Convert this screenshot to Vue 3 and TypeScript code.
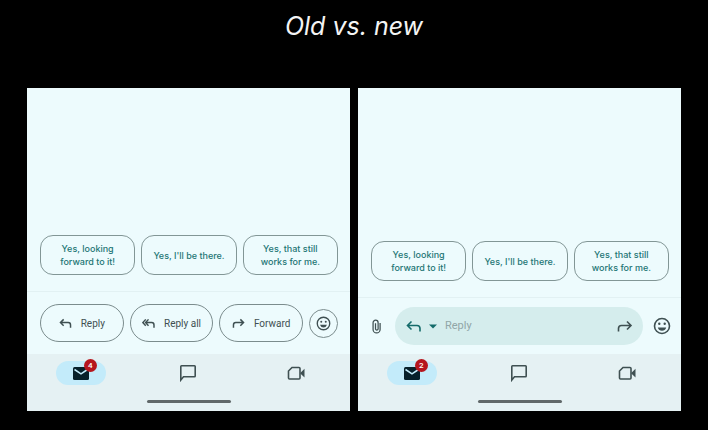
<script setup lang="ts">
interface Panel {
  id: string
  kind: 'buttons' | 'field'
  unread: number
}

const panels: Panel[] = [
  { id: 'old', kind: 'buttons', unread: 4 },
  { id: 'new', kind: 'field', unread: 2 },
]

const suggestions: string[][] = [
  ['Yes, looking', 'forward to it!'],
  ["Yes, I'll be there."],
  ['Yes, that still', 'works for me.'],
]
</script>

<template>
  <main class="page">
    <h1 class="title">Old vs. new</h1>
    <div class="panels">
      <section v-for="panel in panels" :key="panel.id" class="panel" :aria-label="panel.id">
        <div class="chips">
          <button v-for="lines in suggestions" :key="lines[0]" class="chip" type="button">
            <span v-for="line in lines" :key="line">{{ line }}</span>
          </button>
        </div>

        <div v-if="panel.kind === 'buttons'" class="actions">
          <button class="action" type="button">
            <svg class="arrow" viewBox="0 0 14 12"><path d="M5 1.5 1.5 5 5 8.500M1.500 5H10Q12.500 5 12.500 7.500V10.500" /></svg>
            Reply
          </button>
          <button class="action" type="button">
            <svg class="arrow" viewBox="0 0 14 12"><path d="M4 1.500.8 5 4 8.500M7 1.500 3.800 5 7 8.500M3.800 5H10.500Q13 5 13 7.500V10.500" /></svg>
            Reply all
          </button>
          <button class="action" type="button">
            <svg class="arrow" viewBox="0 0 14 12"><path d="M9 1.500 12.500 5 9 8.500M12.500 5H4Q1.500 5 1.500 7.500V10.500" /></svg>
            Forward
          </button>
          <button class="emoji ringed" type="button" aria-label="Add reaction">
            <svg viewBox="0 0 18 18">
              <circle cx="9" cy="9" r="7.500" />
              <circle class="solid" cx="6.300" cy="6.800" r="1.200" />
              <circle class="solid" cx="11.700" cy="6.800" r="1.200" />
              <path class="solid" d="M4.800 10.500H13.200Q12.200 13.800 9 13.800T4.800 10.500Z" />
            </svg>
          </button>
        </div>

        <div v-else class="composer">
          <button class="clip" type="button" aria-label="Attach file">
            <svg viewBox="0 0 10 16"><path d="M9 4V11.200A3.900 3.900 0 0 1 1.200 11.200V3.800A2.700 2.700 0 0 1 6.800 3.800V10.800A1.500 1.500 0 0 1 3.900 10.800V4.500" /></svg>
          </button>
          <div class="field">
            <button class="mode" type="button" aria-label="Reply">
              <svg viewBox="0 0 16 13"><path d="M5.500 1.500 1.500 5.500 5.500 9.500M1.500 5.500H11Q14 5.500 14 8.500V11.500" /></svg>
            </button>
            <button class="caret" type="button" aria-label="Choose reply type">
              <svg viewBox="0 0 8 5"><path d="M0 .5H8L4 4.500Z" /></svg>
            </button>
            <input class="entry" type="text" placeholder="Reply" aria-label="Reply" />
            <button class="forward" type="button" aria-label="Forward">
              <svg viewBox="0 0 16 13"><path d="M10 1.500 14 5.500 10 9.500M14 5.500H4.500Q1.500 5.500 1.500 8.500V11.500" /></svg>
            </button>
          </div>
          <button class="emoji" type="button" aria-label="Add reaction">
            <svg viewBox="0 0 18 18">
              <circle cx="9" cy="9" r="7.500" />
              <circle class="solid" cx="6.300" cy="6.800" r="1.200" />
              <circle class="solid" cx="11.700" cy="6.800" r="1.200" />
              <path class="solid" d="M4.800 10.500H13.200Q12.200 13.800 9 13.800T4.800 10.500Z" />
            </svg>
          </button>
        </div>

        <nav class="nav">
          <div class="tabs">
            <button class="tab" type="button" aria-label="Mail">
              <span class="pill">
                <svg class="mail" viewBox="0 0 16 13">
                  <rect width="16" height="13" rx="1.500" />
                  <path d="M1.500 2.500 8 6.800 14.500 2.500" />
                </svg>
                <span class="badge">{{ panel.unread }}</span>
              </span>
            </button>
            <button class="tab" type="button" aria-label="Chat">
              <svg class="outline" viewBox="0 0 18 18"><path d="M1.800 16V2.500Q1.800 1.800 2.500 1.800H15.500Q16.200 1.800 16.200 2.500V12Q16.200 12.700 15.500 12.700H4.500Z" /></svg>
            </button>
            <button class="tab" type="button" aria-label="Meet">
              <svg class="outline" viewBox="0 0 18 18">
                <path d="M5 3.500H12Q13 3.500 13 4.500V14Q13 15 12 15H2.500Q1.500 15 1.500 14V7Z" />
                <path class="solid" d="M13 9.200 17.500 4.800V13.600Z" />
              </svg>
            </button>
          </div>
          <div class="handle"></div>
        </nav>
      </section>
    </div>
  </main>
</template>

<style>
body {
  background: #000;
}
</style>

<style scoped>
.page {
  box-sizing: border-box;
  min-height: 100vh;
  padding: 8px 27px 16px;
  background: #000;
  font-family: Roboto, "Liberation Sans", sans-serif;
}

.title {
  margin: 0 0 44px;
  color: #f4f4f4;
  font: italic 400 25px/36px Inter, sans-serif;
  text-align: center;
}

.panels {
  display: grid;
  grid-template-columns: 1fr 1fr;
  gap: 8px;
}

.panel {
  display: flex;
  flex-direction: column;
  justify-content: flex-end;
  aspect-ratio: 1;
  min-width: 0;
  background: #edfbfd;
}

button {
  display: flex;
  align-items: center;
  justify-content: center;
  box-sizing: border-box;
  margin: 0;
  padding: 0;
  border: 0;
  background: none;
  color: #3f5052;
  font: inherit;
}

svg {
  display: block;
  fill: none;
  stroke: currentColor;
  stroke-width: 1.6;
}

.solid {
  fill: currentColor;
  stroke: none;
}

.chips {
  display: grid;
  grid-template-columns: repeat(3, 1fr);
  gap: 6px;
  padding: 0 12px 16px 13px;
}

.chip {
  flex-direction: column;
  height: 40px;
  border: 1px solid #829696;
  border-radius: 13px;
  color: #1d7675;
  font: 500 9px/13px Inter, sans-serif;
  white-space: nowrap;
}

.actions {
  display: flex;
  align-items: center;
  gap: 6px;
  padding: 12px 12px 12px 13px;
  border-top: 1px solid #e2f1f3;
}

.action {
  flex: 1;
  gap: 9px;
  height: 38px;
  border: 1px solid #7b8c8d;
  border-radius: 19px;
  font-size: 10px;
  font-weight: 400;
  white-space: nowrap;
}

.arrow {
  width: 13px;
  height: 11px;
}

.emoji svg {
  width: 18px;
  height: 18px;
}

.ringed {
  width: 29px;
  height: 29px;
  border: 1px solid #7b8c8d;
  border-radius: 50%;
}

.ringed svg {
  width: 15px;
  height: 15px;
}

.composer {
  display: flex;
  align-items: center;
  padding: 9px 10px 9px 12px;
  border-top: 1px solid #e2f1f3;
}

.clip {
  width: 13px;
  margin-right: 12px;
}

.clip svg {
  width: 9px;
  height: 15px;
  stroke-width: 1.4;
}

.field {
  display: flex;
  flex: 1;
  align-items: center;
  box-sizing: border-box;
  min-width: 0;
  height: 38px;
  margin-right: 10px;
  padding: 0 10px 0 11px;
  border-radius: 19px;
  background: #d5eded;
}

.mode,
.caret {
  color: #146b6a;
}

.mode svg,
.forward svg {
  width: 16px;
  height: 13px;
}

.caret {
  margin: 0 8px 0 7px;
}

.caret svg {
  width: 8px;
  height: 5px;
  fill: currentColor;
  stroke: none;
}

.entry {
  flex: 1;
  min-width: 0;
  padding: 0;
  border: 0;
  outline: 0;
  background: none;
  color: #3b4b4d;
  font: 400 11px/16px Roboto, sans-serif;
}

.entry::placeholder {
  color: #91a6a7;
  opacity: 1;
}

.nav {
  display: flex;
  flex-direction: column;
  align-items: center;
  box-sizing: border-box;
  height: 57px;
  padding: 7px 0 8px;
  background: #e5f1f3;
}

.tabs {
  display: grid;
  grid-template-columns: repeat(3, 1fr);
  width: 100%;
  height: 24px;
}

.pill {
  position: relative;
  display: flex;
  align-items: center;
  justify-content: center;
  width: 50px;
  height: 24px;
  border-radius: 12px;
  background: #c3ebfa;
}

.mail {
  width: 16px;
  height: 13px;
  fill: #07202a;
  stroke: none;
}

.mail path {
  fill: none;
  stroke: #c3ebfa;
  stroke-width: 1.5;
}

.badge {
  position: absolute;
  top: -2px;
  right: 9px;
  width: 13px;
  height: 13px;
  border-radius: 50%;
  background: #b5161e;
  color: #fff;
  font-size: 8px;
  font-weight: 500;
  line-height: 13px;
  text-align: center;
}

.outline {
  width: 18px;
  height: 18px;
}

.handle {
  width: 84px;
  height: 3px;
  margin-top: auto;
  border-radius: 2px;
  background: #606869;
}
</style>
